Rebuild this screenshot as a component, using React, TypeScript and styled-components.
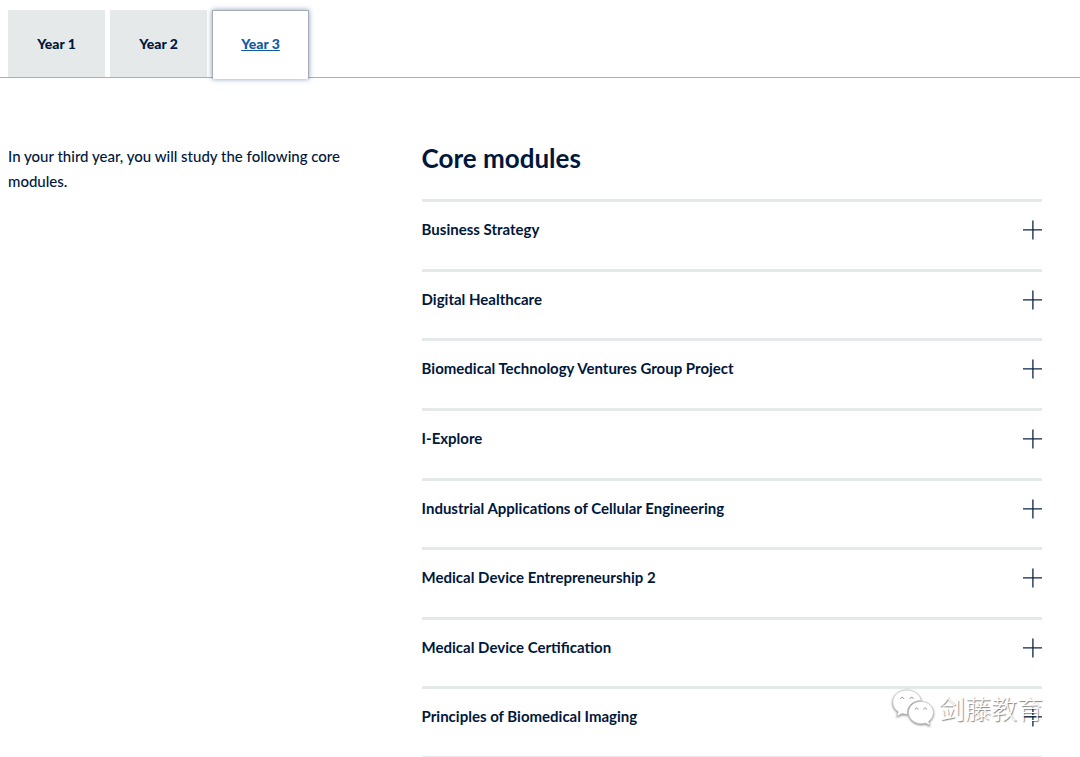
import React from 'react';
import styled, { createGlobalStyle } from 'styled-components';

const navy = '#00173b';
const rule = '#e5e9e9';

const GlobalStyle = createGlobalStyle`
  *, *::before, *::after { box-sizing: border-box; }
  body {
    margin: 0;
    background: #fff;
    color: ${navy};
    font-family: Lato, 'Noto Sans', sans-serif;
    font-size: 15px;
  }
`;

const Page = styled.div`
  position: relative;
  display: flex;
  flex-direction: column;
  min-height: 100vh;
`;

const TabBar = styled.nav`
  display: flex;
  gap: 5px;
  padding: 10px 8px 0;
  border-bottom: 1px solid #a9afb6;
`;

const Tab = styled.a<{ $active?: boolean }>`
  width: 97px;
  height: ${p => (p.$active ? 69 : 67)}px;
  margin-bottom: ${p => (p.$active ? -2 : 0)}px;
  border: ${p => (p.$active ? '1px solid #a6acba' : '0')};
  border-bottom: 0;
  background: ${p => (p.$active ? '#fff' : rule)};
  box-shadow: ${p => (p.$active ? '0 0 5px rgba(20, 60, 120, 0.5)' : 'none')};
  color: ${p => (p.$active ? '#0f5aa5' : navy)};
  font-size: 14px;
  font-weight: 900;
  line-height: ${p => (p.$active ? 65 : 67)}px;
  text-align: center;
  text-decoration: ${p => (p.$active ? 'underline' : 'none')};
`;

const Content = styled.main`
  flex: 1;
  display: grid;
  grid-template-columns: 2fr 3fr;
  padding: 62px 38px 0 8px;
`;

const Intro = styled.p`
  margin: 0;
  padding: 4px 64px 0 0;
  font-weight: 500;
  line-height: 25px;
`;

const Modules = styled.section`
  display: flex;
  flex-direction: column;
`;

const Heading = styled.h2`
  margin: 0 0 23px;
  font-size: 26px;
  font-weight: 700;
  line-height: 36px;
`;

const ModuleList = styled.ul`
  flex: 1;
  display: flex;
  flex-direction: column;
  margin: 0;
  padding: 0;
  list-style: none;
  border-bottom: 1px solid ${rule};
`;

const ModuleItem = styled.li`
  flex: 1;
  border-top: 3px solid ${rule};
`;

const ModuleButton = styled.button`
  display: flex;
  align-items: center;
  justify-content: space-between;
  width: 100%;
  padding: 16px 0;
  border: 0;
  background: none;
  color: inherit;
  font: inherit;
  font-weight: 700;
  line-height: 22px;
  text-align: left;
  cursor: pointer;
`;

const Plus = styled.svg`
  width: 20px;
  height: 20px;
  overflow: visible;
  stroke: #0e2548;
  stroke-width: 1.300;
`;

const Watermark = styled.div`
  position: absolute;
  right: 37px;
  bottom: 30px;
  display: flex;
  align-items: center;
  gap: 5px;
  color: #fff;
  font: 300 26px/38px 'Noto Sans CJK SC', sans-serif;
  text-shadow: 1px 1px 1px rgba(0, 0, 0, 0.5);
  pointer-events: none;
`;

const Logo = styled.svg`
  width: 42px;
  height: 38px;
  filter: drop-shadow(0 1px 1px rgba(0, 0, 0, 0.5));
`;

const years = ['Year 1', 'Year 2', 'Year 3'];
const modules = [
  'Business Strategy',
  'Digital Healthcare',
  'Biomedical Technology Ventures Group Project',
  'I-Explore',
  'Industrial Applications of Cellular Engineering',
  'Medical Device Entrepreneurship 2',
  'Medical Device Certification',
  'Principles of Biomedical Imaging',
];

export default function App() {
  return (
    <Page>
      <GlobalStyle />
      <TabBar>
        {years.map((year, i) => (
          <Tab key={year} href={`#year-${i + 1}`} $active={i === 2}>
            {year}
          </Tab>
        ))}
      </TabBar>
      <Content>
        <Intro>In your third year, you will study the following core modules.</Intro>
        <Modules>
          <Heading>Core modules</Heading>
          <ModuleList>
            {modules.map(name => (
              <ModuleItem key={name}>
                <ModuleButton type="button" aria-expanded={false}>
                  {name}
                  <Plus viewBox="0 0 20 20" aria-hidden="true">
                    <path d="M1 10.800H20M10.900 1.500V20.500" />
                  </Plus>
                </ModuleButton>
              </ModuleItem>
            ))}
          </ModuleList>
        </Modules>
      </Content>
      <Watermark>
        <Logo viewBox="0 0 42 38" aria-hidden="true">
          <g fill="#fff" stroke="#c4c4c4" strokeWidth="0.7">
            <path d="M15 1C7 1 .8 6.300 .8 13.200c0 4 2 7.300 5.400 9.600L4.800 27.300l5.200-2.700c1.800.5 3.400.8 5.300.7C14.500 17.500 20.500 11.600 29.300 11.500 27.900 5.500 22 1 15 1z" />
            <path d="M29 12.500c-7 0-12.500 4.900-12.500 11S22 34.700 29 34.700c1.500 0 3-.3 4.400-.7l4.400 2.400-1.200-4c3-2.200 4.800-5.300 4.800-8.900 0-6.100-5.500-11-12.400-11z" />
          </g>
          <path
            fill="none"
            stroke="#8f8f8f"
            strokeWidth="1"
            d="M8.500 10c.3-2.300 3-2.300 3.400 0M18 10c.3-2.300 3-2.300 3.400 0M23.200 20.500c.3-2 2.700-2 3 0M31.700 20.500c.3-2 2.700-2 3 0"
          />
        </Logo>
        剑藤教育
      </Watermark>
    </Page>
  );
}
